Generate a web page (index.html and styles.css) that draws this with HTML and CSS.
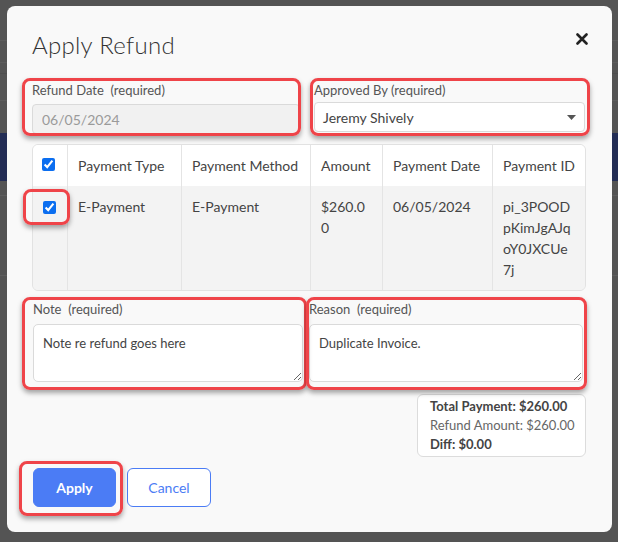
FILE: index.html
```html
<!DOCTYPE html>
<html>
<head>
<meta charset="utf-8">
<link rel="stylesheet" href="styles.css">
</head>
<body>
<div class="modal">
  <div class="modal-head">
    <h1 class="title">Apply Refund</h1>
    <button class="close" aria-label="Close">
      <svg width="12" height="12" viewBox="0 0 12 12"><path d="M1.5 1.5 L10.5 10.5 M10.5 1.5 L1.5 10.5" stroke="#222" stroke-width="2.6" stroke-linecap="round"/></svg>
    </button>
  </div>

  <div class="row-top">
    <div class="field hl-date">
      <label class="lbl">Refund Date&nbsp; (required)</label>
      <input class="input input-disabled" type="text" value="06/05/2024" disabled>
      <span class="hl"></span>
    </div>
    <div class="field hl-appr">
      <label class="lbl">Approved By (required)</label>
      <div class="select">
        <span>Jeremy Shively</span>
        <svg class="caret" width="9" height="5" viewBox="0 0 9 5"><path d="M0 0 H9 L4.5 5 Z" fill="#555"/></svg>
      </div>
      <span class="hl"></span>
    </div>
  </div>

  <div class="table-wrap">
    <table class="pay">
      <colgroup>
        <col class="c-chk"><col class="c-type"><col class="c-meth"><col class="c-amt"><col class="c-date"><col class="c-id">
      </colgroup>
      <thead>
        <tr>
          <th><input type="checkbox" class="chk" checked></th>
          <th>Payment Type</th>
          <th>Payment Method</th>
          <th>Amount</th>
          <th>Payment Date</th>
          <th>Payment ID</th>
        </tr>
      </thead>
      <tbody>
        <tr>
          <td><span class="chk-wrap"><input type="checkbox" class="chk" checked><span class="hl hl-chk"></span></span></td>
          <td>E-Payment</td>
          <td>E-Payment</td>
          <td>$260.00</td>
          <td>06/05/2024</td>
          <td>pi_3POODpKimJgAJqoY0JXCUe7j</td>
        </tr>
      </tbody>
    </table>
  </div>

  <div class="row-notes">
    <div class="field hl-note">
      <label class="lbl">Note&nbsp; (required)</label>
      <textarea class="area">Note re refund goes here</textarea>
      <span class="hl"></span>
    </div>
    <div class="field hl-reason">
      <label class="lbl">Reason&nbsp; (required)</label>
      <textarea class="area">Duplicate Invoice.</textarea>
      <span class="hl"></span>
    </div>
  </div>

  <div class="summary-row">
    <div class="summary">
      <div class="s-strong">Total Payment: $260.00</div>
      <div class="s-normal">Refund Amount: $260.00</div>
      <div class="s-strong">Diff: $0.00</div>
    </div>
  </div>

  <div class="actions">
    <div class="btn-wrap">
      <button class="btn btn-primary">Apply</button>
      <span class="hl hl-apply"></span>
    </div>
    <button class="btn btn-outline">Cancel</button>
  </div>
</div>
</body>
</html>
```

FILE: styles.css
```css
* { box-sizing: border-box; }

html, body { margin: 0; padding: 0; }

body {
  width: 618px;
  height: 542px;
  overflow: hidden;
  font-family: Lato, "Open Sans", "Liberation Sans", sans-serif;
  color: #444;
  background:
    linear-gradient(to bottom,
      transparent 0, transparent 40px, #5c5c5c 40px, #5c5c5c 41px,
      transparent 41px, transparent 62px, #5c5c5c 62px, #5c5c5c 63px,
      transparent 63px, transparent 100px, #5c5c5c 100px, #5c5c5c 101px,
      transparent 101px, transparent 195px, #5e5e5e 195px, #5e5e5e 196px,
      transparent 196px, transparent 275px, #5e5e5e 275px, #5e5e5e 276px,
      transparent 276px),
    linear-gradient(to bottom, #545454 0, #545454 73px, #4e4e4e 73px, #4e4e4e 74px, #545454 74px, #545454 133px, #232d55 133px, #232d55 181px, #545454 181px, #545454 100%);
  padding: 6px 6px 0 7px;
}

.modal {
  width: 605px;
  height: 526px;
  background: #f9f9f9;
  border-radius: 8px;
  padding: 23px 26px 0 25px;
}

.modal-head {
  display: flex;
  justify-content: space-between;
  align-items: flex-start;
}

.title {
  margin: 0;
  font-size: 24px;
  line-height: 32px;
  font-weight: 300;
  color: #333;
  letter-spacing: 0.3px;
}

.close {
  border: 0;
  background: transparent;
  padding: 0;
  margin: 4px -2px 0 0;
  width: 12px;
  height: 12px;
  display: block;
  line-height: 0;
}

.lbl {
  display: block;
  font-size: 13px;
  line-height: 18px;
  color: #555;
  white-space: nowrap;
}

.field { position: relative; }

.hl {
  position: absolute;
  border: 3px solid #ef4449;
  border-radius: 8px;
  box-shadow: 0 3px 5px rgba(0, 0, 0, 0.35);
  pointer-events: none;
  z-index: 2;
}

.row-top {
  display: grid;
  grid-template-columns: 268px 271px;
  column-gap: 14px;
  margin-top: 20px;
}

.hl-date .hl { top: -3px; left: -10px; right: -1px; bottom: -2px; }
.hl-appr .hl { top: -3px; left: -4px; right: -5px; bottom: -2px; }

.input {
  display: block;
  width: 100%;
  height: 30px;
  margin-top: 5px;
  border: 1px solid #dadada;
  border-radius: 4px;
  padding: 0 9px;
  font-family: inherit;
  font-size: 14px;
  color: #444;
  background: #fff;
}

.input-disabled {
  background: #f1f1f1;
  color: #9a9a9a;
  -webkit-text-fill-color: #9a9a9a;
  opacity: 1;
}

.select {
  height: 30px;
  margin-top: 3px;
  border: 1px solid #dadada;
  border-radius: 4px;
  background: #fff;
  padding: 0 7px 0 8px;
  display: flex;
  align-items: center;
  justify-content: space-between;
  font-size: 14px;
  color: #444;
}

.caret { display: block; margin-right: 1px; }

.table-wrap {
  margin-top: 10px;
  border: 1px solid #e2e2e2;
  border-radius: 6px;
  background: #f3f3f3;
}

.pay {
  width: 100%;
  table-layout: fixed;
  border-collapse: separate;
  border-spacing: 0;
  font-size: 14px;
  line-height: 21px;
  color: #444;
}

.c-chk { width: 34px; }
.c-type { width: 114px; }
.c-meth { width: 129px; }
.c-amt { width: 72px; }
.c-date { width: 110px; }
.c-id { width: auto; }

.pay th, .pay td {
  text-align: left;
  vertical-align: top;
  padding: 10px 10px 10px 10px;
  border-left: 1px solid #e4e4e4;
}

.pay th:last-child, .pay td:last-child { padding-right: 13px; }

.pay td { word-break: break-all; background: #f3f3f3; }
.pay th { font-weight: 400; background: #fff; white-space: nowrap; }

.pay th:first-child, .pay td:first-child { border-left: 0; padding: 12px 0 0 9px; }
.pay th:first-child { padding-top: 13px; }
.pay td:first-child { padding-top: 12px; }

.pay th:first-child { border-top-left-radius: 5px; }
.pay th:last-child { border-top-right-radius: 5px; }
.pay td:first-child { border-bottom-left-radius: 5px; }
.pay td:last-child { border-bottom-right-radius: 5px; }

.chk {
  display: block;
  margin: 0;
  width: 13px;
  height: 13px;
  accent-color: #0b6ef0;
}

.chk-wrap {
  position: relative;
  display: inline-block;
  margin-left: 1px;
}

.hl-chk { top: -12px; left: -20px; right: -14px; bottom: -11px; }

.row-notes {
  display: grid;
  grid-template-columns: 271px 274px;
  column-gap: 6px;
  margin-top: 9px;
}

.hl-note { margin-left: 1px; }
.hl-note .hl { top: -3px; left: -11px; right: -4px; bottom: -8px; }
.hl-reason .hl { top: -3px; left: -3px; right: -4px; bottom: -8px; }

.area {
  display: block;
  width: 100%;
  height: 58px;
  margin-top: 6px;
  border: 1px solid #dadada;
  border-radius: 5px;
  background: #fff;
  padding: 8px 9px;
  font-family: inherit;
  font-size: 13px;
  line-height: 20px;
  color: #444;
  resize: vertical;
}

.summary-row {
  display: flex;
  justify-content: flex-end;
  margin-top: 12px;
}

.summary {
  width: 169px;
  height: 63px;
  background: #fff;
  border: 1px solid #dcdcdc;
  border-radius: 6px;
  padding: 2px 0 0 12px;
  font-size: 13px;
  line-height: 19px;
}

.s-strong { font-weight: 700; color: #444; }
.s-normal { color: #666; }

.actions {
  display: flex;
  gap: 11px;
  margin-top: 11px;
  margin-left: 1px;
}

.btn-wrap { position: relative; }

.btn {
  display: block;
  height: 39px;
  border-radius: 6px;
  font-family: inherit;
  font-size: 14px;
  padding: 0;
}

.btn-primary {
  width: 83px;
  background: #4b7cf5;
  border: 1px solid #4b7cf5;
  color: #fff;
  font-weight: 700;
}

.btn-outline {
  width: 84px;
  background: #fff;
  border: 1px solid #4b7cf5;
  color: #4b7cf5;
}

.hl-apply { top: -7px; left: -14px; right: -7px; bottom: -9px; }
```
